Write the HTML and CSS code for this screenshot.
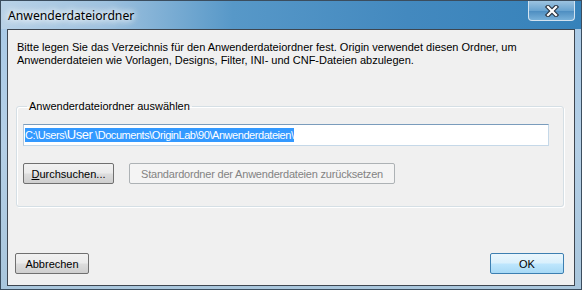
FILE: index.html
```html
<!DOCTYPE html>
<html lang="de">
<head>
    <meta charset="UTF-8">
    <title>Anwenderdateiordner</title>
    <link rel="stylesheet" href="styles.css">
</head>
<body>
    <div class="window">
        <div class="titlebar">
            <span class="title">Anwenderdateiordner</span>
            <button class="close" title="Schließen">
                <svg width="16" height="12" viewBox="0 0 16 12">
                    <path d="M4 2 L12 10 M12 2 L4 10" stroke="#2a3440" stroke-width="4.4" fill="none" stroke-linecap="square"/>
                    <path d="M4 2 L12 10 M12 2 L4 10" stroke="#fff" stroke-width="2.2" fill="none" stroke-linecap="square"/>
                </svg>
            </button>
        </div>

        <div class="client">
            <p class="intro">Bitte legen Sie das Verzeichnis für den Anwenderdateiordner fest. Origin verwendet diesen Ordner, um<br>Anwenderdateien wie Vorlagen, Designs, Filter, INI- und CNF-Dateien abzulegen.</p>

            <!-- Ordnerauswahl -->
            <fieldset class="group">
                <legend>Anwenderdateiordner auswählen</legend>
                <div class="path-input">
                    <span class="selected">C:\Users\<span class="user">User</span> \Documents\OriginLab\90\Anwenderdateien\</span>
                </div>
                <div class="group-buttons">
                    <button class="btn browse"><u>D</u>urchsuchen...</button>
                    <button class="btn reset" disabled>Standardordner der Anwenderdateien zurücksetzen</button>
                </div>
            </fieldset>

            <div class="footer">
                <button class="btn cancel">Abbrechen</button>
                <button class="btn ok">OK</button>
            </div>
        </div>
    </div>
</body>
</html>
```

FILE: styles.css
```css
body {
    margin: 0;
    background: #9fc1dd;
}
.window {
    width: 582px;
    height: 290px;
    box-sizing: border-box;
    border: 1px solid #3b4d5e;
    background: linear-gradient(to bottom, #a8c9e6 0%, #b4cfe6 50%, #a9c6dc 100%);
    display: flex;
    flex-direction: column;
}
.titlebar {
    height: 28px;
    display: flex;
    align-items: flex-start;
    background: linear-gradient(to right, #b9d2e7 0%, #9fc2df 18%, #5798c8 40%, #4389bf 70%, #3682ba 100%);
}
.title {
    font-family: "Noto Sans", "Open Sans", sans-serif;
    font-size: 12.2px;
    color: #000;
    margin: 6px 0 0 7px;
    text-shadow: 0 0 6px #fff, 0 0 8px #fff, 0 0 10px #e8f2fb;
}
.close {
    margin-left: auto;
    margin-right: 6px;
    width: 47px;
    height: 20px;
    padding: 0;
    border: 1px solid #d3e3f0;
    border-top: none;
    border-radius: 0 0 4px 4px;
    background: linear-gradient(to bottom, #9cc3e0 0%, #6aa4d0 50%, #4f8fc2 55%, #78b0d8 100%);
    display: flex;
    align-items: center;
    justify-content: center;
}
.client {
    flex: 1;
    margin: 0 6px 3px 6px;
    border: 1px solid #3e4650;
    background: #f0f0f0;
    font-family: "Liberation Sans", Arial, sans-serif;
    font-size: 11px;
    color: #000;
    display: flex;
    flex-direction: column;
}
.intro {
    margin: 11px 0 0 9px;
    line-height: 13px;
}
.group {
    margin: 33px 10px 0 8px;
    padding: 12px 6px 22px 6px;
    border: 1px solid #d5dfe5;
    border-radius: 3px;
    box-shadow: inset 1px 1px 0 #fff, 1px 1px 0 #fff;
}
.group legend {
    padding: 0 2px;
    margin-left: 4px;
}
.path-input {
    height: 22px;
    box-sizing: border-box;
    border: 1px solid #abadb3;
    border-color: #7a9cbc #c5d8e8 #c5d8e8 #b5c8da;
    background: #fff;
    padding: 3px 1px;
    margin-right: 8px;
    line-height: 14px;
    letter-spacing: -0.45px;
    white-space: nowrap;
}
.selected {
    background: #3399ff;
    color: #fff;
    padding: 1px 0;
}
.user {
    font-size: 13px;
}
.group-buttons {
    display: flex;
    gap: 15px;
    margin-top: 17px;
}
.btn {
    font-family: "Liberation Sans", Arial, sans-serif;
    font-size: 11px;
    color: #000;
    height: 21px;
    padding: 0 4px;
    white-space: nowrap;
    border: 1px solid #707070;
    border-radius: 2px;
    background: linear-gradient(to bottom, #f2f2f2 0%, #ebebeb 48%, #dddddd 52%, #cfcfcf 100%);
}
.browse {
    width: 91px;
}
.reset {
    width: 266px;
    letter-spacing: -0.2px;
}
.btn:disabled {
    color: #838383;
    border-color: #adb2b5;
    background: #f4f4f4;
}
.footer {
    margin-top: auto;
    display: flex;
    justify-content: space-between;
    padding: 0 10px 11px 7px;
}
.cancel {
    width: 74px;
}
.ok {
    width: 74px;
    border-color: #3c7fb1;
    background: linear-gradient(to bottom, #eaf6fd 0%, #d9f0fc 48%, #bee6fd 52%, #a7d9f5 100%);
}
```
